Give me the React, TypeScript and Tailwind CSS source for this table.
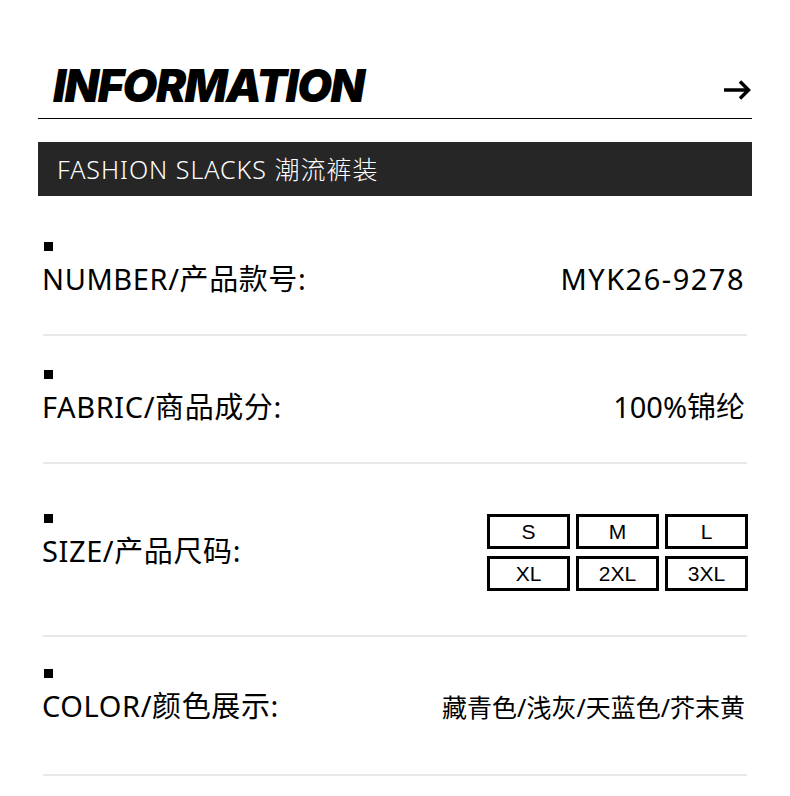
import React from 'react';

const sans = "font-['Noto_Sans','Noto_Sans_CJK_SC',sans-serif]";

function Arrow() {
  return (
    <svg width="28" height="20" viewBox="0 0 28 20" fill="none" stroke="#000" strokeWidth="3.5" strokeLinecap="butt" strokeLinejoin="miter">
      <path d="M1 10H25" />
      <path d="M17 1.5L25.5 10L17 18.5" />
    </svg>
  );
}

function Bullet() {
  return <div className="ml-px w-[9px] h-[9px] bg-black" />;
}

const sizes = ['S', 'M', 'L', 'XL', '2XL', '3XL'];

export default function App() {
  return (
    <div className={`w-[790px] h-[796px] bg-white overflow-hidden ${sans}`}>
      <div className="px-[38px]">
        {/* Header */}
        <div className="h-[119px] border-b border-black flex items-end justify-between pl-[15px] pr-[1px] pb-[10px]">
          <h1 className="font-['Inter',sans-serif] font-black italic text-[45px] leading-none tracking-[-1.5px] text-black">
            INFORMATION
          </h1>
          <div className="mb-[8px]">
            <Arrow />
          </div>
        </div>

        {/* Title bar */}
        <div className="mt-[23px] h-[54px] bg-[#262626] flex items-center pl-[19px]">
          <span className="text-white text-[25px] font-light leading-none tracking-[1px]">FASHION SLACKS 潮流裤装</span>
        </div>

        {/* Number */}
        <div className="mx-[5px] h-[140px] pt-[46px] border-b-2 border-[#e8e8e8]">
          <Bullet />
          <div className="mt-[10px] flex items-baseline justify-between text-[29px] leading-[36px] text-black">
            <span className="-ml-px tracking-[0.6px]">NUMBER/产品款号:</span>
            <span className="pr-[2px] tracking-[1.5px]">MYK26-9278</span>
          </div>
        </div>

        {/* Fabric */}
        <div className="mx-[5px] h-[128px] pt-[34px] border-b-2 border-[#e8e8e8]">
          <Bullet />
          <div className="mt-[10px] flex items-baseline justify-between text-[29px] leading-[36px] text-black">
            <span className="-ml-px tracking-[0.6px]">FABRIC/商品成分:</span>
            <span className="pr-[2px]">100%锦纶</span>
          </div>
        </div>

        {/* Size */}
        <div className="mx-[5px] h-[173px] pt-[50px] border-b-2 border-[#e8e8e8] flex justify-between">
          <div>
            <Bullet />
            <div className="mt-[10px] text-[29px] leading-[36px] text-black -ml-px tracking-[0.6px]">SIZE/产品尺码:</div>
          </div>
          <div className="grid grid-cols-3 gap-x-[6px] gap-y-[7px] h-fit -mr-px">
            {sizes.map((s) => (
              <div
                key={s}
                className="w-[83px] h-[35px] border-[3px] border-black flex items-center justify-center font-['Liberation_Sans',sans-serif] text-[21px] text-black"
              >
                {s}
              </div>
            ))}
          </div>
        </div>

        {/* Color */}
        <div className="mx-[5px] h-[139px] pt-[32px] border-b-2 border-[#e8e8e8]">
          <Bullet />
          <div className="mt-[10px] flex items-baseline justify-between text-[29px] leading-[36px] text-black">
            <span className="-ml-px tracking-[0.6px]">COLOR/颜色展示:</span>
            <span className="pr-[2px] text-[25px]">藏青色/浅灰/天蓝色/芥末黄</span>
          </div>
        </div>
      </div>
    </div>
  );
}
